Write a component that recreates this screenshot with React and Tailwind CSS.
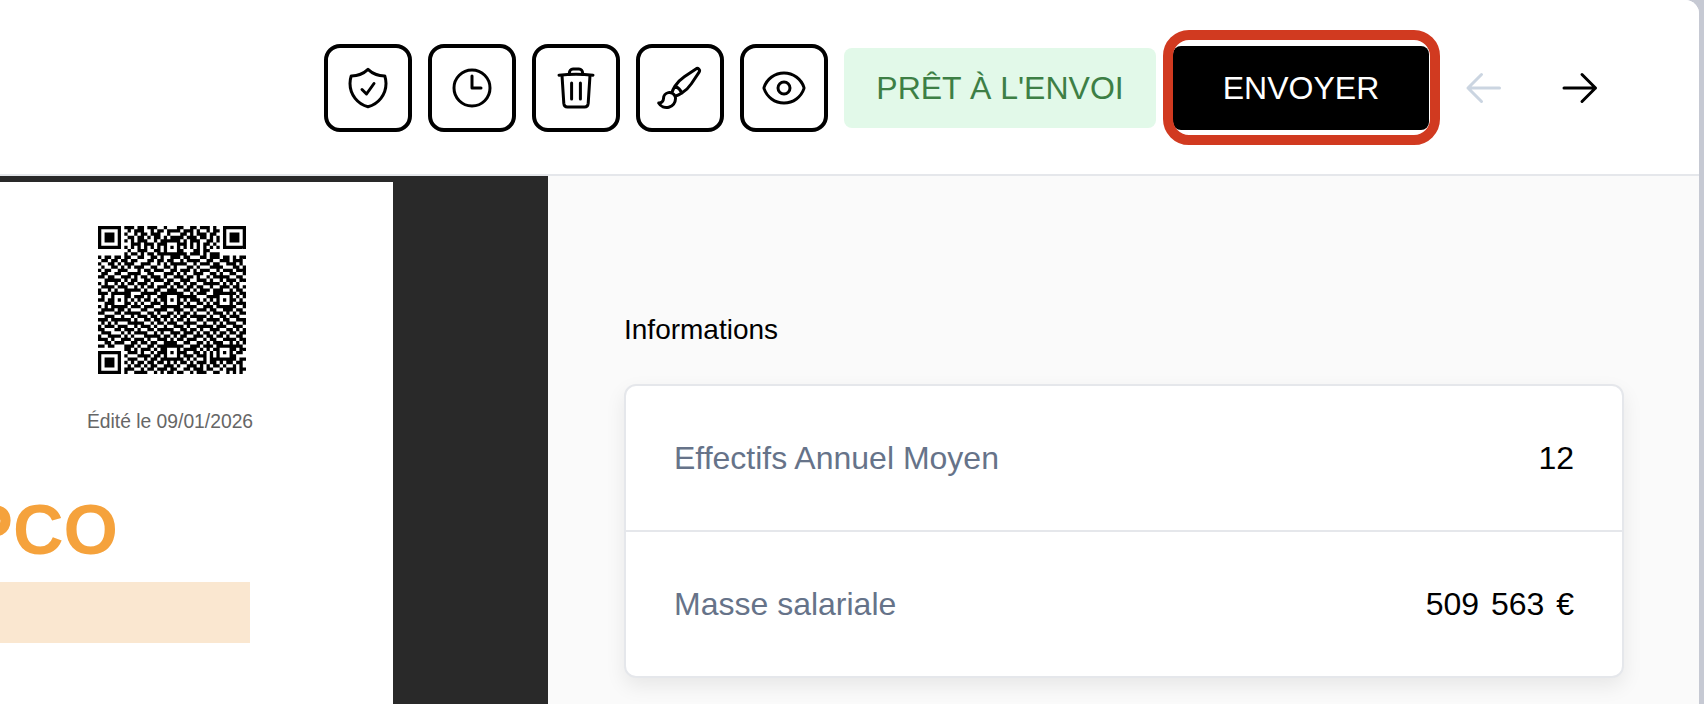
const QR_ROWS = [
  "000000001110110111001000110011011101000000000",
  "000000000101110010110111101110100101100000000",
  "000000001001011011100100011010111011000000000",
  "000000000110110101101011110111011010100000000",
  "000000001010111001011010101011100110100000000",
  "000000000011101110110111011010101101000000000",
  "000000001010101010101010101010101010100000000",
  "000000000100111001100101110001101100000000000",
  "000000001011010110111001011011101011100000000",
  "101101101100110011010011101100011011101101011",
  "011011011011000110110110010111100110011101110",
  "100110101110011100101011111001011101100111010",
  "010011010101110011001101000110100011110001101",
  "101100111000101101110011011101011100101110111",
  "011001100111100110001110101001110011010011001",
  "110110011101011011101001110110100101111100110",
  "001111101011001101110110011100111010010111011",
  "101001010110111010001101101011001111101010100",
  "011110111001010110111010110110110010011101101",
  "100101001111101001100111001101011101110010110",
  "111010110100011111011001110010111001001111011",
  "010011101101110100110110011111000111110100101",
  "110111010010101101011011101011101010101011010",
  "001100111101010011101100110100110101011100111",
  "101011001011101110010111001111001110110011001",
  "011110110100011001111001110010111011001110110",
  "110001101111100110100110101101000101110101011",
  "001110010010111011011101011011111010011011100",
  "111011111101001101101010110100110111101100111",
  "010101000111110010110111001111001001010111001",
  "101110111001011101001001110100111110111001110",
  "110001101110100110111110011011010011100110101",
  "011100010101111001010011101110101101011011011",
  "100111101010001111101101011001110110110100110",
  "111010011101110100111010110111001011001111011",
  "001101110011011011001111001100110101110010101",
  "110110001110100110110101110011101110011101110",
  "000000001101011101011010101111010101010101011",
  "000000000111010010110111011001101010111010110",
  "000000001000111101101001101110111010101101000",
  "000000000111001011011110110101001011101011011",
  "000000001010110110110101011010111011010110110",
  "000000000101101011001110100111010101101001010",
  "000000001110010110111011001101110110010111011",
  "000000001001111001010110110010111001100101010",
];

function moduleAt(x, y) {
  const finder = (ox, oy) => {
    const dx = x - ox;
    const dy = y - oy;
    if (dx < 0 || dy < 0 || dx > 6 || dy > 6) return null;
    if (dx === 0 || dy === 0 || dx === 6 || dy === 6) return true;
    if (dx >= 2 && dx <= 4 && dy >= 2 && dy <= 4) return true;
    return false;
  };
  const f = finder(0, 0) ?? finder(38, 0) ?? finder(0, 38);
  if (f !== null) return f;
  for (const [ax, ay] of [[22, 6], [6, 22], [22, 22], [38, 22], [22, 38], [38, 38]]) {
    const d = Math.max(Math.abs(x - ax), Math.abs(y - ay));
    if (d <= 2) return d !== 1;
  }
  return QR_ROWS[y]?.[x] === "1";
}

function QrCode() {
  const cells = [];
  for (let y = 0; y < 45; y++) {
    for (let x = 0; x < 45; x++) {
      if (moduleAt(x, y)) cells.push(`M${x} ${y}h1v1h-1z`);
    }
  }
  return (
    <svg viewBox="0 0 45 45" className="block h-[148px] w-[148px]">
      <path d={cells.join("")} fill="#000" />
    </svg>
  );
}

function HeroIcon({ children, className = "text-black" }) {
  return (
    <svg
      viewBox="0 0 24 24"
      fill="none"
      stroke="currentColor"
      strokeWidth="1.5"
      strokeLinecap="round"
      strokeLinejoin="round"
      className={`h-12 w-12 shrink-0 ${className}`}
    >
      {children}
    </svg>
  );
}

function IconButton({ children }) {
  return (
    <div className="flex h-[88px] w-[88px] shrink-0 items-center justify-center rounded-2xl border-4 border-black bg-white">
      {children}
    </div>
  );
}

function Row({ label, value, last }) {
  return (
    <div
      className={
        last
          ? "flex h-[144px] items-center justify-between px-12"
          : "flex h-[146px] items-center justify-between border-b-2 border-[#e5e7eb] px-12"
      }
    >
      <span className="text-[32px] text-[#667389]">{label}</span>
      <span className="text-[32px] text-black [word-spacing:3px]">{value}</span>
    </div>
  );
}

export default function App() {
  return (
    <div className="flex h-[704px] w-full overflow-hidden bg-[#c6c9d3] font-['Liberation_Sans',Arial,sans-serif]">
      <div className="flex h-full w-[1699px] flex-col overflow-hidden rounded-tr-[14px] bg-white">
        <header className="flex h-[176px] shrink-0 items-center justify-end gap-4 border-b-2 border-[#e5e7eb] bg-white pr-[95px] pt-[2px]">
          <IconButton>
            <HeroIcon>
              <path d="M9 12.75 11.25 15 15 9.75m-3-7.036A11.959 11.959 0 0 1 3.598 6 11.99 11.99 0 0 0 3 9.749c0 5.592 3.824 10.29 9 11.623 5.176-1.332 9-6.03 9-11.622 0-1.31-.21-2.571-.598-3.751h-.152c-3.196 0-6.1-1.248-8.25-3.285Z" />
            </HeroIcon>
          </IconButton>
          <IconButton>
            <HeroIcon>
              <path d="M12 6v6h4.5m4.5 0a9 9 0 1 1-18 0 9 9 0 0 1 18 0Z" />
            </HeroIcon>
          </IconButton>
          <IconButton>
            <HeroIcon>
              <path d="M3.5 5.6c5.5-.6 11.5-.6 17 0" />
              <path d="M8.7 5.2V4.4c0-1 .7-1.9 1.8-1.9h3c1.1 0 1.8.9 1.8 1.9v.8" />
              <path d="M5 5.7l.9 14c.1 1 .8 1.8 1.8 1.8h8.6c1 0 1.7-.8 1.8-1.8l.9-14" />
              <path d="M9.8 9.5v8" />
              <path d="M14.2 9.5v8" />
            </HeroIcon>
          </IconButton>
          <IconButton>
            <HeroIcon>
              <path d="M9.53 16.122a3 3 0 0 0-5.78 1.128 2.25 2.25 0 0 1-2.4 2.245 4.5 4.5 0 0 0 8.4-2.245c0-.399-.078-.78-.22-1.128Zm0 0a15.998 15.998 0 0 0 3.388-1.62m-5.043-.025a15.994 15.994 0 0 1 1.622-3.395m3.42 3.42a15.995 15.995 0 0 0 4.764-4.648l3.876-5.814a1.151 1.151 0 0 0-1.597-1.597L14.146 6.32a15.996 15.996 0 0 0-4.649 4.763m3.42 3.42a6.776 6.776 0 0 0-3.42-3.42" />
            </HeroIcon>
          </IconButton>
          <IconButton>
            <HeroIcon>
              <path d="M2.036 12.322a1.012 1.012 0 0 1 0-.639C3.423 7.51 7.36 4.5 12 4.5c4.638 0 8.573 3.007 9.963 7.178.07.207.07.431 0 .639C20.577 16.49 16.64 19.5 12 19.5c-4.638 0-8.573-3.007-9.963-7.178Z" />
              <path d="M15 12a3 3 0 1 1-6 0 3 3 0 0 1 6 0Z" />
            </HeroIcon>
          </IconButton>
          <div className="mr-px flex h-[80px] w-[312px] shrink-0 items-center justify-center rounded-lg bg-[#e2f9e9] text-[32px] text-[#3d7f45]">
            PRÊT À L'ENVOI
          </div>
          <div className="relative flex h-[84px] w-[256px] shrink-0 items-center justify-center rounded-lg bg-black text-[32px] text-white">
            ENVOYER
            <div className="absolute left-[-10px] top-[-16px] h-[115px] w-[277px] rounded-[26px] border-[10px] border-[#d13a20]" />
          </div>
          <div className="ml-[15px] flex items-center gap-12">
            <HeroIcon className="text-[#cbd5e1]">
              <path d="M10.5 19.5 3.75 12.75m0 0L10.5 6m-6.75 6.75h15.75" transform="translate(.25 -.75)" />
            </HeroIcon>
            <HeroIcon>
              <path d="M12.75 5.25 19.5 12m0 0-6.75 6.75M19.5 12H3.75" transform="translate(.25 0)" />
            </HeroIcon>
          </div>
        </header>
        <main className="flex min-h-0 flex-1">
          <section className="w-[548px] shrink-0 bg-[#292929] pt-[6px]">
            <div className="flex h-full w-[393px] flex-col bg-white pt-[44px]">
              <div className="flex w-[344px] flex-col items-center">
                <QrCode />
                <p className="mr-[4px] mt-[37px] whitespace-nowrap text-[19.3px] leading-[22px] text-[#666666]">Édité le 09/01/2026</p>
              </div>
              <div className="mt-[57px] flex w-[118px] justify-end">
                <span className="whitespace-nowrap text-[70px] font-bold leading-[80px] text-[#f5a23c]">OPCO</span>
              </div>
              <div className="mt-[12px] h-[61px] w-[250px] shrink-0 bg-[#fae7d0]" />
            </div>
          </section>
          <section className="min-w-0 flex-1 bg-[#fafafa] pl-[76px] pr-[75px] pt-[138px]">
            <h2 className="text-[28px] font-normal leading-[32px] text-black">Informations</h2>
            <div className="mt-[38px] rounded-xl border-2 border-[#e5e7eb] bg-white shadow-[0_8px_20px_rgba(0,0,0,0.08)]">
              <Row label="Effectifs Annuel Moyen" value="12" />
              <Row label="Masse salariale" value="509 563 €" last />
            </div>
          </section>
        </main>
      </div>
    </div>
  );
}
